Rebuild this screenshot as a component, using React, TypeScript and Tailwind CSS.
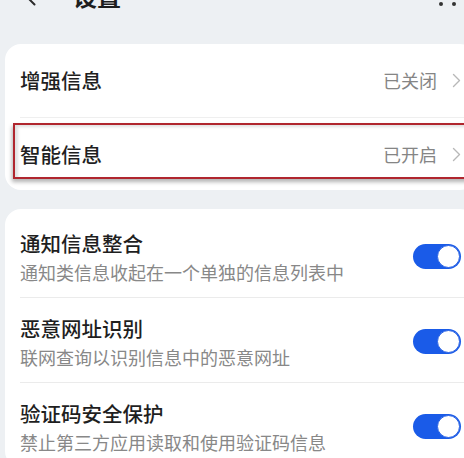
import React from "react";

const font = { fontFamily: '"Noto Sans CJK SC", "Noto Sans", sans-serif' };

function Chevron() {
  return (
    <svg width="9" height="15" viewBox="0 0 9 15" className="ml-[15px] shrink-0">
      <path d="M1.5 1.5 L7.5 7.5 L1.5 13.5" fill="none" stroke="#b8b8b8" strokeWidth="1.4" strokeLinecap="round" strokeLinejoin="round" />
    </svg>
  );
}

function Toggle() {
  return (
    <div className="w-[48px] h-[25px] rounded-full bg-[#1a5be8] flex items-center justify-end px-[1px] shrink-0">
      <div className="w-[23px] h-[23px] rounded-full bg-white border-[1.5px] border-[#2c64e4]" />
    </div>
  );
}

const switches = [
  { title: "通知信息整合", desc: "通知类信息收起在一个单独的信息列表中" },
  { title: "恶意网址识别", desc: "联网查询以识别信息中的恶意网址" },
  { title: "验证码安全保护", desc: "禁止第三方应用读取和使用验证码信息" },
];

export default function App() {
  return (
    <div className="w-[464px] h-[458px] overflow-hidden bg-[#edf0f3]" style={font}>
      <div className="w-[476px] flex flex-col">
        {/* header, mostly scrolled off the top */}
        <div className="-mt-[20px] h-[32px] flex items-center pl-[24px] pr-[7px]">
          <svg width="12" height="20" viewBox="0 0 12 20">
            <path d="M10.5 1.5 L2 10 L10.5 18.5" fill="none" stroke="#2a2a2a" strokeWidth="2" strokeLinecap="round" strokeLinejoin="round" />
          </svg>
          <span className="ml-[37px] text-[24px] leading-[32px] font-bold text-[#1e1e1e]">设置</span>
          <svg width="30" height="6" viewBox="0 0 30 6" className="ml-auto mt-[16px]">
            <circle cx="2" cy="3" r="2" fill="#333" />
            <circle cx="15" cy="3" r="2" fill="#333" />
            <circle cx="28" cy="3" r="2" fill="#333" />
          </svg>
        </div>

        <div className="mt-[32px] ml-[5px] rounded-[16px] bg-white">
          <div className="ml-[15px] pr-[15px] h-[74px] flex items-center border-b border-[#efefef]">
            <span className="text-[20.5px] font-medium text-[#1f1f1f]">增强信息</span>
            <span className="ml-auto text-[18px] text-[#858585]">已关闭</span>
            <Chevron />
          </div>
          <div className="relative ml-[15px] pr-[15px] h-[72px] flex items-center">
            <span className="text-[20.5px] font-medium text-[#1f1f1f]">智能信息</span>
            <span className="ml-auto text-[18px] text-[#858585]">已开启</span>
            <Chevron />
            <div className="absolute left-[-7px] right-[-20px] top-[5px] bottom-[11px] border-2 border-[#b0262e] shadow-[-1px_3px_4px_rgba(0,0,0,0.3),inset_3px_2px_3px_rgba(0,0,0,0.12)]" />
          </div>
        </div>

        <div className="mt-[19px] ml-[5px] rounded-[16px] bg-white pt-[4px]">
          {switches.map((s, i) => (
            <div
              key={s.title}
              className={`ml-[15px] pr-[15px] pt-[16px] pb-[13px] flex items-center ${i < switches.length - 1 ? "border-b border-[#ebebeb]" : ""}`}
            >
              <div className="flex flex-col flex-1">
                <span className="text-[20.5px] leading-[28px] font-medium text-[#1f1f1f]">{s.title}</span>
                <span className="mt-[3px] text-[18px] leading-[24px] text-[#888888]">{s.desc}</span>
              </div>
              <Toggle />
            </div>
          ))}
        </div>
      </div>
    </div>
  );
}
